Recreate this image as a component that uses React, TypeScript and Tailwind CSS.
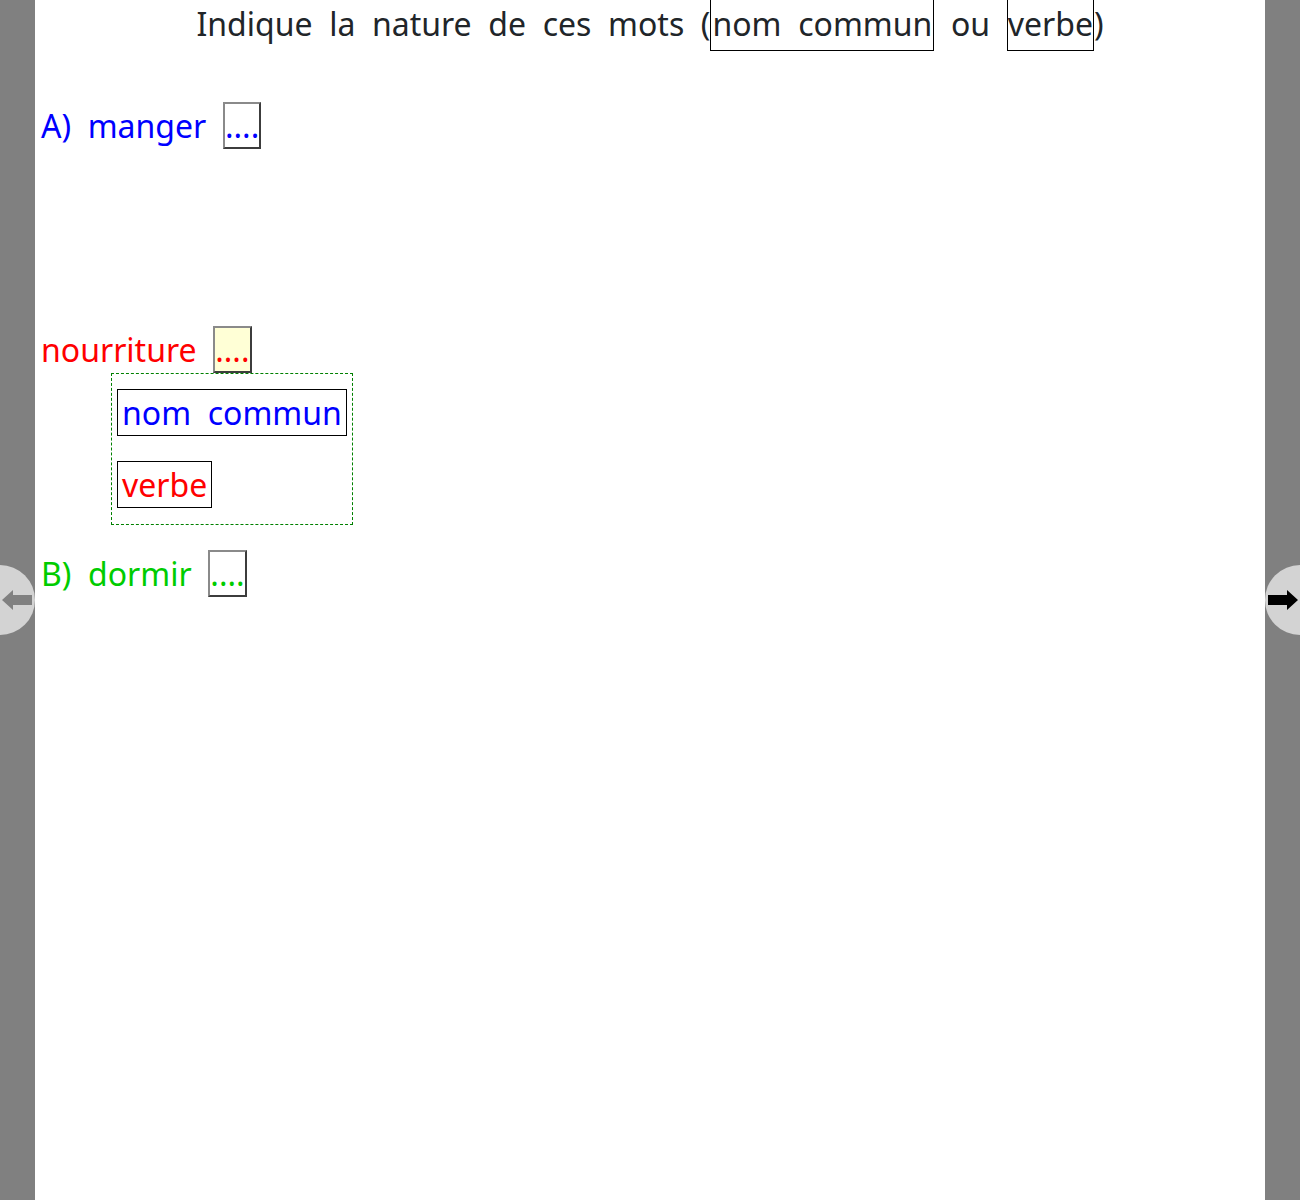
import React from 'react';

const font = { fontFamily: '"Noto Sans", "Open Sans", sans-serif' };

const Blank = ({ color, bg }: { color: string; bg?: string }) => (
    <span
        className={`inline-block border-2 border-t-[#8a8a8a] border-l-[#8a8a8a] border-r-[#3c3c3c] border-b-[#3c3c3c] leading-[43px] ${bg ?? 'bg-white'} ${color}`}
    >
        ....
    </span>
);

const Arrow = ({ dir, color }: { dir: 'left' | 'right'; color: string }) => (
    <svg width="30" height="22" viewBox="0 0 30 22">
        {dir === 'left' ? (
            <path d="M0 11 L11 1 L11 6 L30 6 L30 16 L11 16 L11 21 Z" fill={color} />
        ) : (
            <path d="M30 11 L19 1 L19 6 L0 6 L0 16 L19 16 L19 21 Z" fill={color} />
        )}
    </svg>
);

const App: React.FC = () => {
    return (
        <div className="relative flex min-h-[1200px] w-full overflow-hidden bg-[#808080]" style={font}>
            <div className="w-[35px] shrink-0" />
            <div className="flex-1 bg-white text-[32px]">
                <div className="whitespace-pre pt-[2px] text-center leading-[43px] text-[#212529]">
                    {'Indique  la  nature  de  ces  mots  ('}
                    <span className="border border-black px-[1px] pt-[8px] pb-[5px]">nom  commun</span>
                    {'  ou  '}
                    <span className="border border-black px-0 pt-[8px] pb-[5px]">verbe</span>
                    {')'}
                </div>

                <div className="mt-[57px] flex flex-col gap-[177px] pl-[6px]">
                    <div className="flex items-center whitespace-pre text-[#0000ff]">
                        <span className="leading-[43px]">{'A)  manger  '}</span>
                        <Blank color="text-[#0000ff]" />
                    </div>

                    <div className="relative flex items-center whitespace-pre text-[#ff0000]">
                        <span className="leading-[43px]">{'nourriture  '}</span>
                        <Blank color="text-[#ff0000]" bg="bg-[#ffffd6]" />
                        <div className="absolute top-[47px] left-[70px] z-10 flex w-[242px] flex-col items-start gap-[25px] border border-dashed border-[#008000] bg-white pt-[15px] pb-[16px] pl-[5px]">
                            <span className="border border-black px-[4px] leading-[45px] text-[#0000ff]">nom  commun</span>
                            <span className="border border-black px-[4px] leading-[45px] text-[#ff0000]">verbe</span>
                        </div>
                    </div>

                    <div className="flex items-center whitespace-pre text-[#00cc00]">
                        <span className="leading-[43px]">{'B)  dormir  '}</span>
                        <Blank color="text-[#00cc00]" />
                    </div>
                </div>
            </div>
            <div className="w-[35px] shrink-0" />

            <div className="absolute top-[565px] -left-[35px] flex h-[70px] w-[70px] items-center justify-end rounded-full bg-[#d3d3d3] pr-[3px]">
                <Arrow dir="left" color="#808080" />
            </div>
            <div className="absolute top-[565px] -right-[35px] flex h-[70px] w-[70px] items-center justify-start rounded-full bg-[#d3d3d3] pl-[3px]">
                <Arrow dir="right" color="#000000" />
            </div>
        </div>
    );
};

export default App;
